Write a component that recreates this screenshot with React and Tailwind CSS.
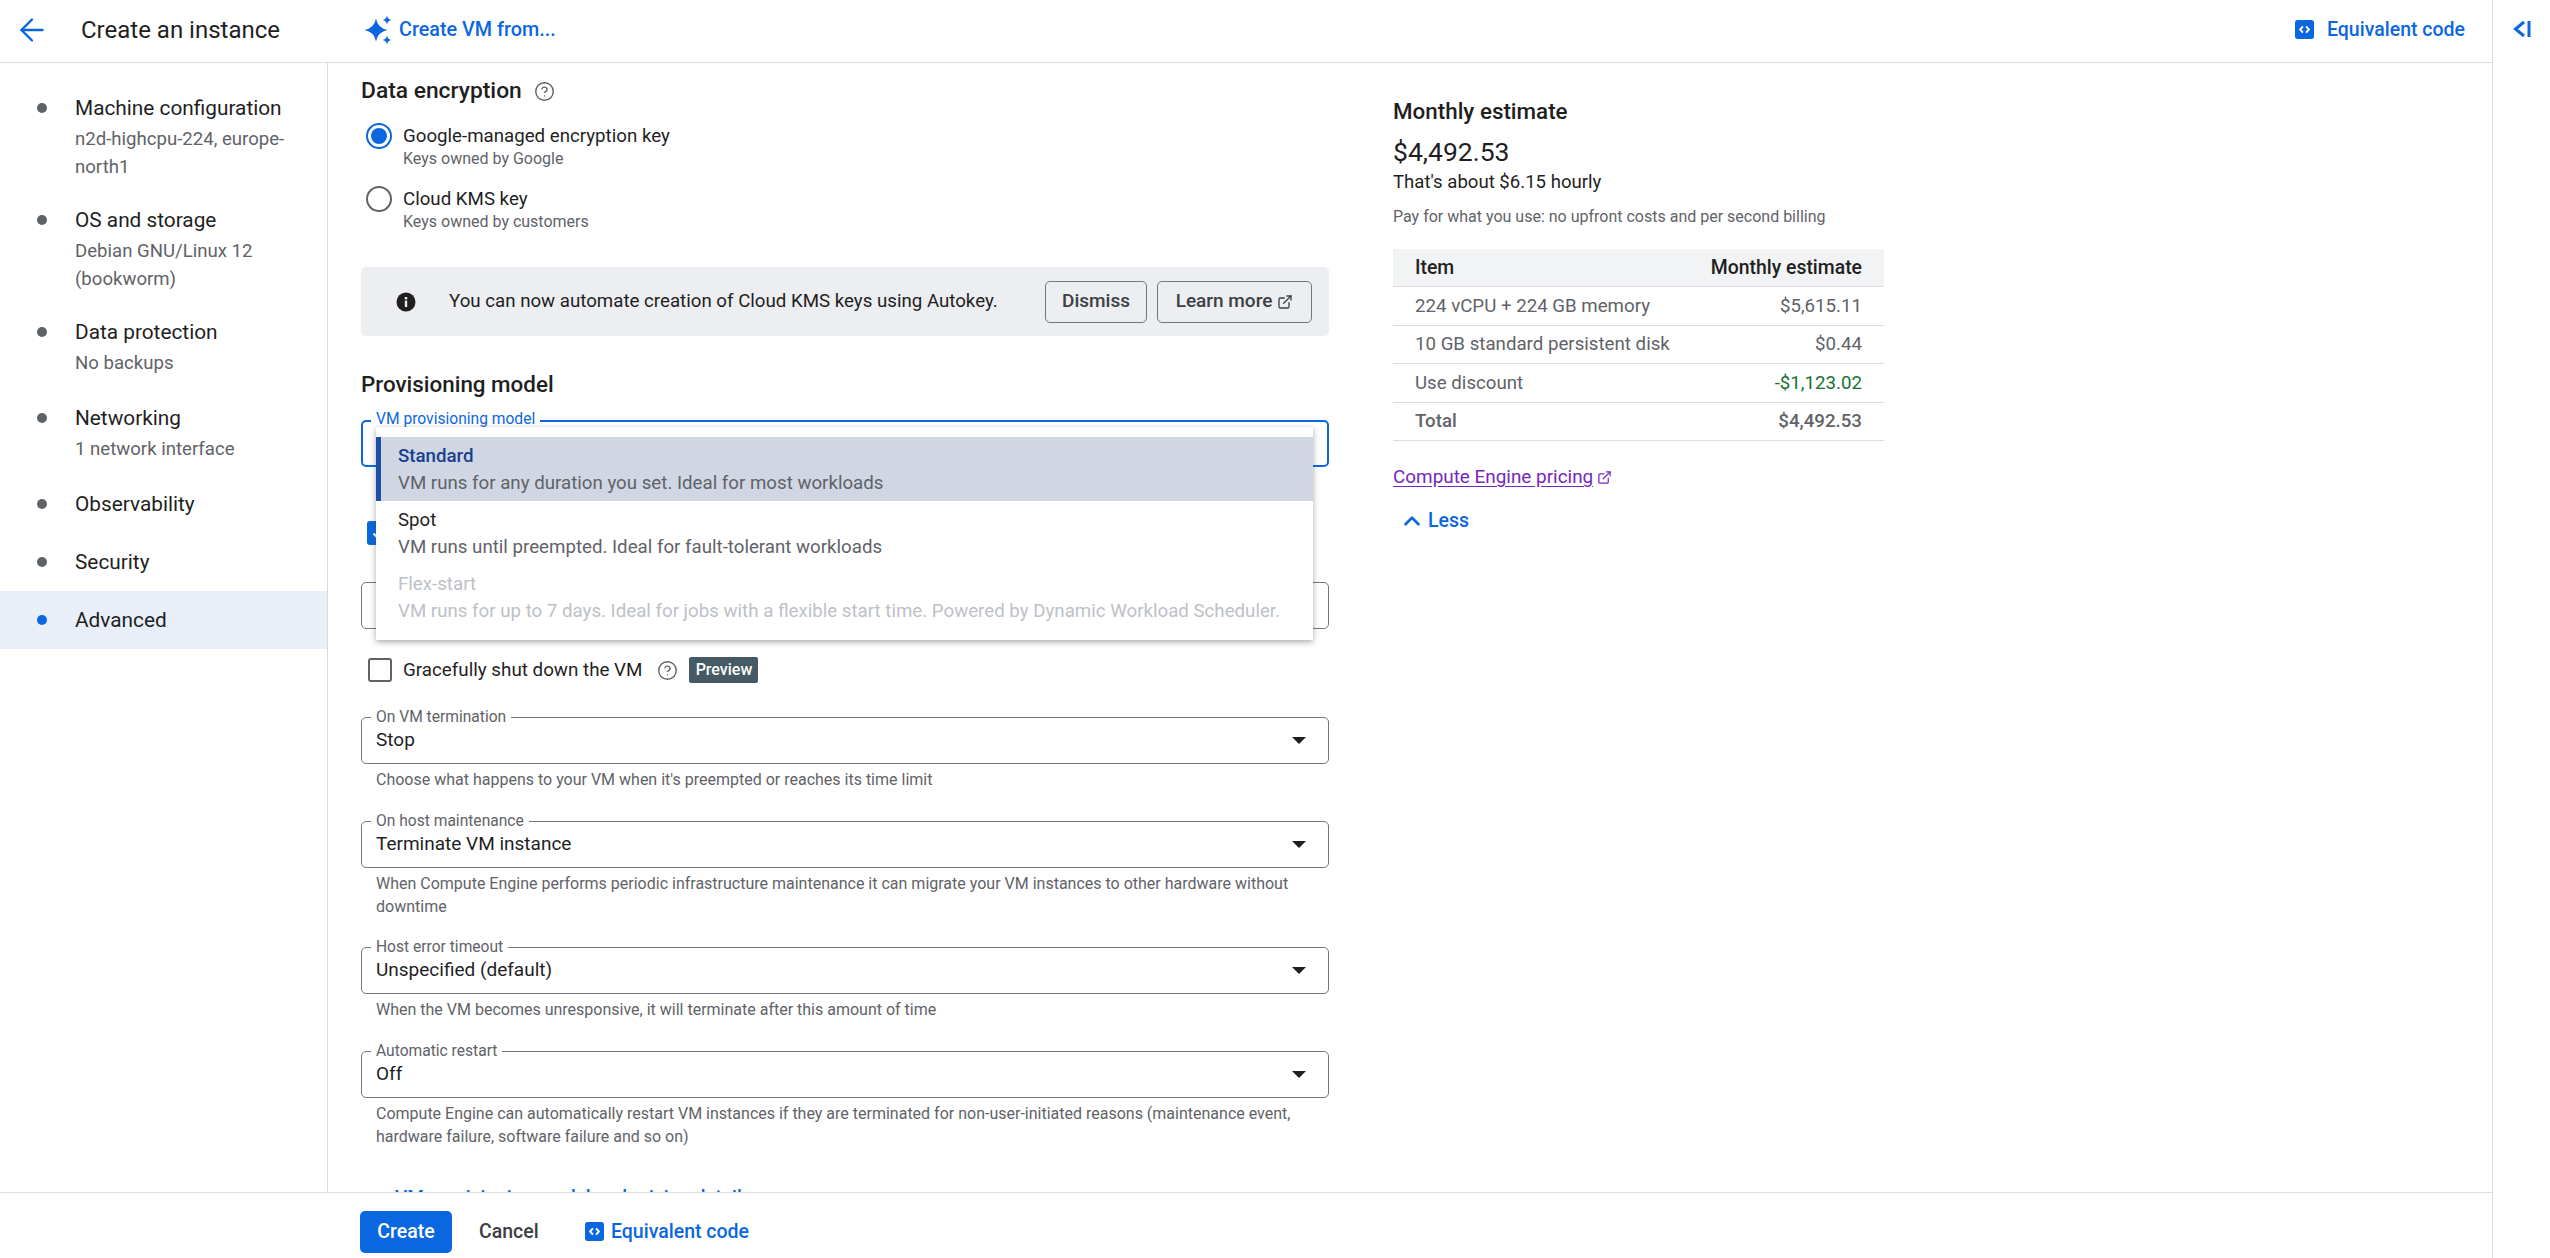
import { ArrowLeft, ChevronUp, CircleHelp, ExternalLink } from 'lucide-react'

const font = "font-['Roboto',sans-serif]"

const navItems = [
  { title: 'Machine configuration', sub: ['n2d-highcpu-224, europe-', 'north1'] },
  { title: 'OS and storage', sub: ['Debian GNU/Linux 12', '(bookworm)'] },
  { title: 'Data protection', sub: ['No backups'] },
  { title: 'Networking', sub: ['1 network interface'] },
  { title: 'Observability', sub: [] },
  { title: 'Security', sub: [] },
  { title: 'Advanced', sub: [], active: true },
]

const costRows = [
  { item: '224 vCPU + 224 GB memory', cost: '$5,615.11' },
  { item: '10 GB standard persistent disk', cost: '$0.44' },
  { item: 'Use discount', cost: '-$1,123.02', green: true },
  { item: 'Total', cost: '$4,492.53', bold: true },
]

const options = [
  { title: 'Standard', sub: 'VM runs for any duration you set. Ideal for most workloads', selected: true },
  { title: 'Spot', sub: 'VM runs until preempted. Ideal for fault-tolerant workloads' },
  { title: 'Flex-start', sub: 'VM runs for up to 7 days. Ideal for jobs with a flexible start time. Powered by Dynamic Workload Scheduler.', disabled: true },
]

function CodeIcon() {
  return (
    <svg width="19" height="19" viewBox="0 0 18 18" className="shrink-0">
      <rect x="0" y="0" width="18" height="18" rx="2.5" fill="#0b67df" />
      <path d="M7.5 6 L4.8 9 L7.5 12 M10.5 6 L13.2 9 L10.5 12" fill="none" stroke="#fff" strokeWidth="1.8" />
    </svg>
  )
}

function Sparkle() {
  return (
    <svg width="30" height="30" viewBox="0 0 30 30" className="shrink-0">
      <path d="M13 3.5 Q14.8 13.2 24.5 15 Q14.8 16.8 13 26.5 Q11.2 16.8 1.5 15 Q11.2 13.2 13 3.5Z" fill="#0b67df" />
      <path d="M24 0.5 Q24.6 4.4 28.5 5 Q24.6 5.6 24 9.5 Q23.4 5.6 19.5 5 Q23.4 4.4 24 0.5Z" fill="#0b67df" />
      <path d="M24 20.5 Q24.6 24.4 28.5 25 Q24.6 25.6 24 29.5 Q23.4 25.6 19.5 25 Q23.4 24.4 24 20.5Z" fill="#0b67df" />
    </svg>
  )
}

function InfoFilled() {
  return (
    <svg width="20" height="20" viewBox="0 0 20 20" className="shrink-0">
      <circle cx="10" cy="10" r="9.5" fill="#1f1f1f" />
      <rect x="8.8" y="8.6" width="2.4" height="6.4" fill="#eceef1" />
      <rect x="8.8" y="5" width="2.4" height="2.4" fill="#eceef1" />
    </svg>
  )
}

function Field({ label, value, hint, focused }) {
  return (
    <div>
      <div className={`relative h-[47px] rounded-[5px] bg-white flex items-center justify-between pl-[14px] pr-[22px] ${focused ? 'border-2 border-[#0b67df]' : 'border border-[#747775]'}`}>
        <span className={`absolute bg-white px-[5px] text-[15.6px] leading-[18px] ${focused ? '-top-[12px] left-[8px] text-[#0b67df]' : '-top-[10px] left-[9px] text-[#5f6368]'}`}>{label}</span>
        <span className="text-[19px] text-[#1f1f1f]">{value}</span>
        <span className="w-0 h-0 border-x-[7px] border-x-transparent border-t-[7px] border-t-[#1f1f1f]" />
      </div>
      {hint && (
        <div className="pl-[15px] pt-[4px] text-[16px] leading-[23px] text-[#5f6368]">
          {hint.map((line) => <div key={line}>{line}</div>)}
        </div>
      )}
    </div>
  )
}

function Radio({ checked, label, sub }) {
  return (
    <div className="flex gap-[12px] pl-[5px]">
      <span className={`mt-[1px] w-[26px] h-[26px] rounded-full border-2 flex items-center justify-center shrink-0 ${checked ? 'border-[#0b67df]' : 'border-[#5f6368]'}`}>
        {checked && <span className="w-[16px] h-[16px] rounded-full bg-[#0b67df]" />}
      </span>
      <div className="-ml-[1px]">
        <div className="text-[18.7px] leading-[28px] text-[#1f1f1f]">{label}</div>
        <div className="text-[16px] leading-[18px] text-[#5f6368]">{sub}</div>
      </div>
    </div>
  )
}

export default function App() {
  return (
    <div className={`${font} relative h-[1258px] w-[2550px] overflow-hidden bg-white flex`}>
      <div className="flex-1 min-w-0 flex flex-col">
        {/* top bar */}
        <header className="h-[63px] shrink-0 border-b border-[#dadce0] flex items-center pb-[3px]">
          <div className="w-[363px] flex items-center shrink-0">
            <ArrowLeft className="ml-[14px] w-[36px] h-[36px] text-[#0b67df]" strokeWidth={1.6} />
            <span className="ml-[31px] text-[24px] text-[#1f1f1f]">Create an instance</span>
          </div>
          <Sparkle />
          <span className="ml-[6px] text-[19.8px] font-medium text-[#0b67df]">Create VM from...</span>
          <div className="ml-auto flex items-center gap-[13px] pr-[27px]">
            <CodeIcon />
            <span className="text-[19.5px] font-medium text-[#0b67df]">Equivalent code</span>
          </div>
        </header>

        <div className="flex-1 min-h-0 flex">
          {/* left nav */}
          <nav className="w-[328px] shrink-0 border-r border-[#dadce0] pt-[16px]">
            {navItems.map((n) => (
              <div
                key={n.title}
                className={`flex pl-[37px] pr-[30px] pt-[14px] ${n.sub.length === 0 ? 'pb-[14px]' : n.sub.length === 1 ? 'pb-[12px]' : 'pb-[10px]'} ${n.active ? 'bg-[#e8eff9]' : ''}`}
              >
                <span className={`mt-[10px] w-[10px] h-[10px] rounded-full shrink-0 ${n.active ? 'bg-[#0b67df]' : 'bg-[#5f6368]'}`} />
                <div className="ml-[28px]">
                  <div className="text-[20.8px] leading-[30px] text-[#1f1f1f]">{n.title}</div>
                  {n.sub.length > 0 && (
                    <div className="mt-[2px]">
                      {n.sub.map((s) => (
                        <div key={s} className="text-[18.6px] leading-[28px] text-[#5f6368] whitespace-nowrap">{s}</div>
                      ))}
                    </div>
                  )}
                </div>
              </div>
            ))}
          </nav>

          <div className="flex-1 min-w-0 flex flex-col">
            <div className="flex-1 min-h-0 flex overflow-hidden">
              {/* main form */}
              <main className="relative w-[968px] ml-[33px] shrink-0 pt-[14px]">
                <div className="flex items-center gap-[12px] h-[28px]">
                  <h2 className="text-[22.8px] font-medium text-[#1f1f1f]">Data encryption</h2>
                  <CircleHelp className="w-[21px] h-[21px] text-[#5f6368]" strokeWidth={1.6} />
                </div>
                <div className="mt-[17px] flex flex-col gap-[17px]">
                  <Radio checked label="Google-managed encryption key" sub="Keys owned by Google" />
                  <Radio label="Cloud KMS key" sub="Keys owned by customers" />
                </div>

                <div className="mt-[36px] h-[69px] rounded-[5px] bg-[#eceef1] flex items-center pl-[35px] pr-[17px]">
                  <InfoFilled />
                  <span className="ml-[33px] text-[18.7px] text-[#1f1f1f]">You can now automate creation of Cloud KMS keys using Autokey.</span>
                  <div className="ml-auto flex gap-[10px]">
                    <button className="h-[42px] w-[102px] rounded-[5px] border border-[#747775] text-[19px] font-medium text-[#3c4043]">Dismiss</button>
                    <button className="h-[42px] w-[155px] rounded-[5px] border border-[#747775] text-[19px] font-medium text-[#3c4043] flex items-center justify-center gap-[5px]">
                      Learn more <ExternalLink className="w-[16px] h-[16px]" strokeWidth={2} />
                    </button>
                  </div>
                </div>

                <h2 className="mt-[34px] text-[22.4px] leading-[28px] font-medium text-[#1f1f1f]">Provisioning model</h2>

                <div className="mt-[22px]">
                  <Field focused label="VM provisioning model" value="" />
                </div>

                {/* fields behind the open menu */}
                <div className="mt-[53px] flex items-center h-[26px] pl-[6px]">
                  <span className="w-[24px] h-[24px] rounded-[3px] bg-[#0b67df] flex items-center justify-center">
                    <svg width="18" height="18" viewBox="0 0 18 18" fill="none" stroke="#fff" strokeWidth="2.4">
                      <path d="M3.5 9.5 L7.5 13.5 L15 5" />
                    </svg>
                  </span>
                </div>
                <div className="mt-[36px] h-[47px] rounded-[5px] border border-[#747775]" />

                <div className="mt-[28px] flex items-center h-[26px] pl-[7px]">
                  <span className="w-[24px] h-[24px] rounded-[3px] border-2 border-[#5f6368]" />
                  <span className="ml-[11px] text-[18.8px] text-[#1f1f1f]">Gracefully shut down the VM</span>
                  <CircleHelp className="ml-[15px] w-[21px] h-[21px] text-[#5f6368]" strokeWidth={1.6} />
                  <span className="ml-[11px] h-[26px] w-[69px] rounded-[2px] bg-[#455a64] text-white text-[16px] font-medium flex items-center justify-center">Preview</span>
                </div>

                <div className="mt-[34px]">
                  <Field label="On VM termination" value="Stop" hint={["Choose what happens to your VM when it's preempted or reaches its time limit"]} />
                </div>
                <div className="mt-[30px]">
                  <Field label="On host maintenance" value="Terminate VM instance" hint={['When Compute Engine performs periodic infrastructure maintenance it can migrate your VM instances to other hardware without', 'downtime']} />
                </div>
                <div className="mt-[29px]">
                  <Field label="Host error timeout" value="Unspecified (default)" hint={['When the VM becomes unresponsive, it will terminate after this amount of time']} />
                </div>
                <div className="mt-[30px]">
                  <Field label="Automatic restart" value="Off" hint={['Compute Engine can automatically restart VM instances if they are terminated for non-user-initiated reasons (maintenance event,', 'hardware failure, software failure and so on)']} />
                </div>
                <div className="mt-[37px] pl-[34px] text-[19px] leading-[24px] font-medium text-[#0b67df]">VM provisioning model and pricing details</div>

                {/* open select menu */}
                <div className="absolute left-[15px] top-[364px] w-[937px] h-[213px] bg-white py-[10px] shadow-[0_2px_6px_rgba(60,64,67,0.45)]">
                  {options.map((o) => (
                    <div key={o.title} className={`h-[64px] pt-[6px] ${o.selected ? 'bg-[#d0d7e3] border-l-[5px] border-[#1c4fa8] pl-[17px]' : 'pl-[22px]'}`}>
                      <div className={`text-[18.7px] leading-[27px] ${o.selected ? 'text-[#1a3f8f] font-medium' : o.disabled ? 'text-[#bdc1c6]' : 'text-[#1f1f1f]'}`}>{o.title}</div>
                      <div className={`text-[18.7px] leading-[27px] ${o.disabled ? 'text-[#bdc1c6]' : 'text-[#5f6368]'}`}>{o.sub}</div>
                    </div>
                  ))}
                </div>
              </main>

              {/* cost panel */}
              <aside className="ml-[64px] w-[491px] shrink-0 pt-[34px]">
                <div className="text-[22.4px] leading-[28px] font-medium text-[#1f1f1f]">Monthly estimate</div>
                <div className="mt-[9px] text-[26.5px] leading-[36px] text-[#1f1f1f]">$4,492.53</div>
                <div className="text-[18.6px] leading-[24px] text-[#1f1f1f]">That's about $6.15 hourly</div>
                <div className="mt-[12px] text-[16px] leading-[22px] text-[#5f6368]">Pay for what you use: no upfront costs and per second billing</div>
                <div className="mt-[21px]">
                  <div className="h-[38px] bg-[#f1f3f4] border-b border-[#dadce0] flex items-center justify-between px-[22px] text-[19.4px] font-medium text-[#1f1f1f]">
                    <span>Item</span><span>Monthly estimate</span>
                  </div>
                  {costRows.map((r) => (
                    <div key={r.item} className={`h-[38.5px] border-b border-[#dadce0] flex items-center justify-between px-[22px] text-[18.7px] text-[#5f6368] ${r.bold ? 'font-medium' : ''}`}>
                      <span>{r.item}</span>
                      <span className={r.green ? 'text-[#137333]' : ''}>{r.cost}</span>
                    </div>
                  ))}
                </div>
                <div className="mt-[22px] flex items-center gap-[4px] text-[18.9px] text-[#7627bb]">
                  <span className="underline underline-offset-[3px]">Compute Engine pricing</span>
                  <ExternalLink className="w-[15px] h-[15px]" strokeWidth={2} />
                </div>
                <div className="mt-[15px] pl-[6px] flex items-center gap-[3px] text-[19.5px] font-medium text-[#0b67df]">
                  <ChevronUp className="w-[26px] h-[26px]" strokeWidth={2.4} />
                  Less
                </div>
              </aside>
            </div>
          </div>
        </div>

        {/* footer */}
        <footer className="absolute bottom-0 left-0 w-[2492px] h-[66px] bg-white border-t border-[#dadce0] flex items-center pl-[360px] pt-[12px]">
          <button className="h-[42px] w-[92px] rounded-[5px] bg-[#0b67df] text-white text-[19.5px] font-medium">Create</button>
          <span className="ml-[27px] w-[60px] text-[19.5px] font-medium text-[#3c4043]">Cancel</span>
          <span className="ml-[46px]"><CodeIcon /></span>
          <span className="ml-[7px] text-[19.5px] font-medium text-[#0b67df]">Equivalent code</span>
        </footer>
      </div>

      {/* collapsed side rail */}
      <div className="w-[58px] shrink-0 border-l border-[#dadce0] pt-[17px] pl-[20px]">
        <svg width="20" height="24" viewBox="0 0 20 24" fill="none" stroke="#0b67df" strokeWidth="3">
          <path d="M11 5 L2.5 12 L11 19" />
          <path d="M16 4 V20" />
        </svg>
      </div>
    </div>
  )
}
